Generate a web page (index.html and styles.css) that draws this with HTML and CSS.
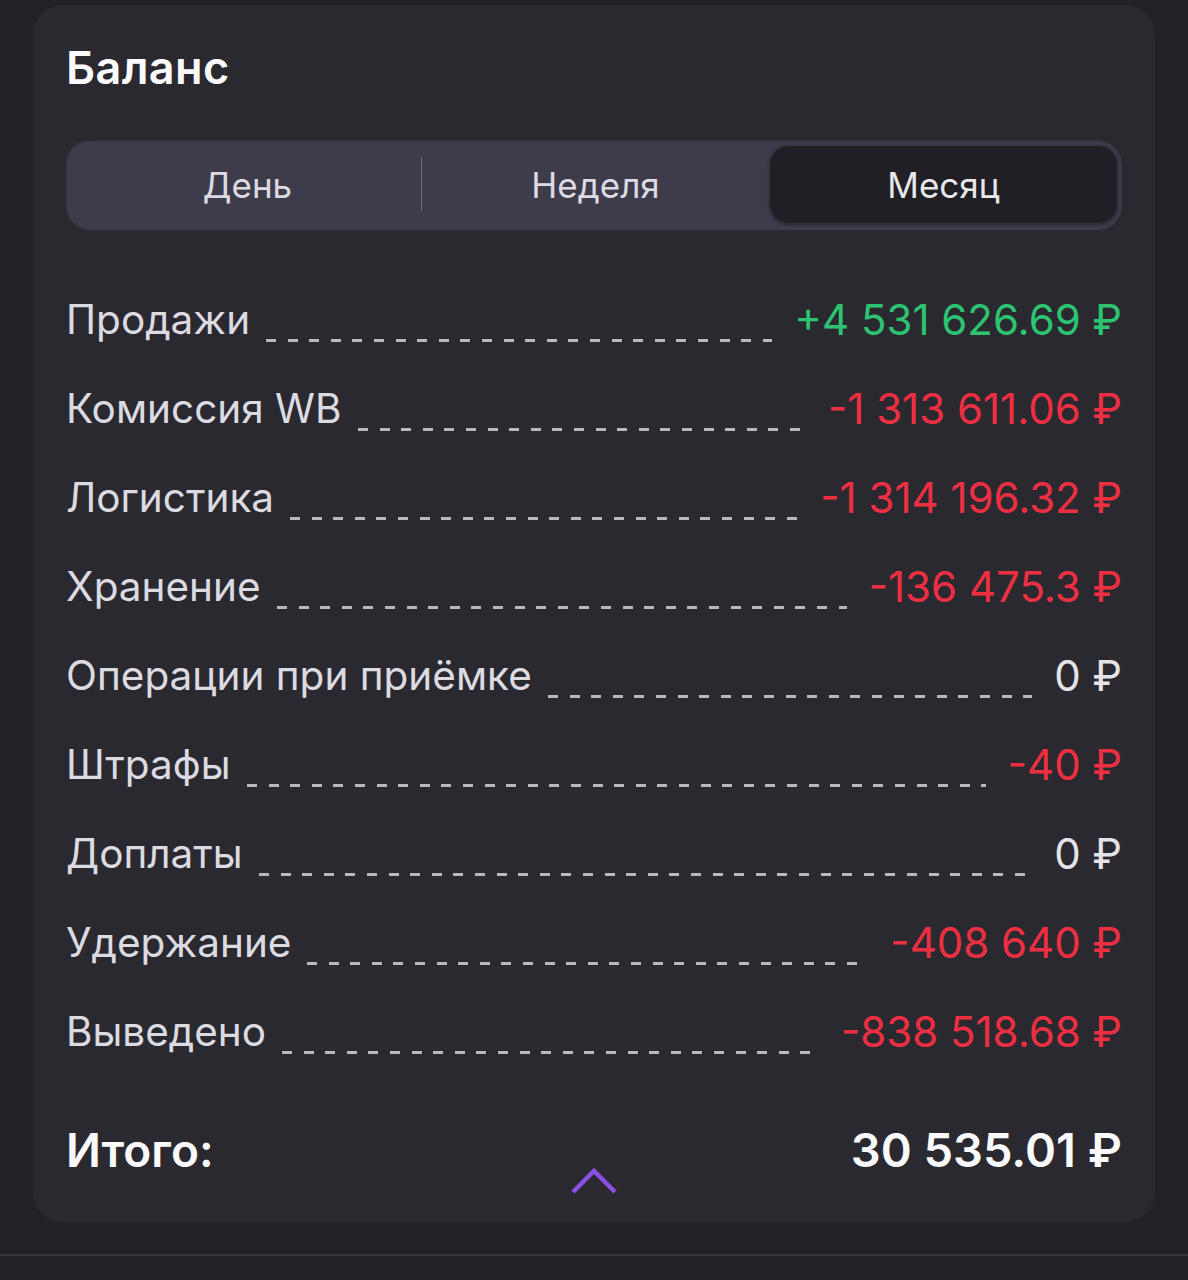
FILE: index.html
```html
<!DOCTYPE html>
<html lang="ru">

<head>
    <meta charset="UTF-8">
    <meta name="viewport" content="width=device-width, initial-scale=1.0">
    <title>Баланс</title>
    <link rel="stylesheet" href="styles.css">
</head>

<body>

    <div class="balance-card">
        <h1 class="card-title">Баланс</h1>

        <!-- period switch -->
        <div class="period-switch">
            <div class="period-item first">День</div>
            <div class="period-sep"></div>
            <div class="period-item">Неделя</div>
            <div class="period-item active">Месяц</div>
        </div>

        <div class="rows">
            <div class="row">
                <span class="row-label">Продажи</span>
                <span class="row-dots"></span>
                <span class="row-value plus">+4 531 626.69 ₽</span>
            </div>
            <div class="row">
                <span class="row-label">Комиссия WB</span>
                <span class="row-dots"></span>
                <span class="row-value minus">-1 313 611.06 ₽</span>
            </div>
            <div class="row">
                <span class="row-label">Логистика</span>
                <span class="row-dots"></span>
                <span class="row-value minus">-1 314 196.32 ₽</span>
            </div>
            <div class="row">
                <span class="row-label">Хранение</span>
                <span class="row-dots"></span>
                <span class="row-value minus">-136 475.3 ₽</span>
            </div>
            <div class="row">
                <span class="row-label">Операции при приёмке</span>
                <span class="row-dots"></span>
                <span class="row-value">0 ₽</span>
            </div>
            <div class="row">
                <span class="row-label">Штрафы</span>
                <span class="row-dots"></span>
                <span class="row-value minus">-40 ₽</span>
            </div>
            <div class="row">
                <span class="row-label">Доплаты</span>
                <span class="row-dots"></span>
                <span class="row-value">0 ₽</span>
            </div>
            <div class="row">
                <span class="row-label">Удержание</span>
                <span class="row-dots"></span>
                <span class="row-value minus">-408 640 ₽</span>
            </div>
            <div class="row">
                <span class="row-label">Выведено</span>
                <span class="row-dots"></span>
                <span class="row-value minus">-838 518.68 ₽</span>
            </div>
        </div>

        <div class="total">
            <span class="total-label">Итого:</span>
            <svg class="collapse-icon" width="48" height="30" viewBox="0 0 48 30">
                <polyline points="3,27 24,6 45,27" fill="none" stroke="#8b4fe3" stroke-width="4.5" />
            </svg>
            <span class="total-value">30 535.01 ₽</span>
        </div>
    </div>

    <div class="bottom-line"></div>

</body>

</html>
```

FILE: styles.css
```css
body {
    margin: 0;
    background-color: #222127;
    font-family: Inter, "Noto Sans", sans-serif;
    color: #dedde3;
    height: 1280px;
    overflow: hidden;
}

.balance-card {
    margin: 5px 33px 0 33px;
    padding: 0 33px 0 33px;
    height: 1217px;
    box-sizing: border-box;
    background-color: #2a2930;
    border-radius: 30px;
}

.card-title {
    margin: 0;
    padding-top: 34px;
    font-size: 45px;
    font-weight: 600;
    line-height: 58px;
    color: #fafafc;
    letter-spacing: 0.4px;
}

.period-switch {
    margin-top: 43px;
    height: 90px;
    box-sizing: border-box;
    padding: 5px 4px 6px 0;
    display: flex;
    align-items: stretch;
    background-color: #3e3c4b;
    border-radius: 24px;
    box-shadow: inset 0 1px 2px rgba(0, 0, 0, 0.25);
}

.period-item {
    flex: 1;
    display: flex;
    align-items: center;
    justify-content: center;
    font-size: 35px;
    color: #dcdbe3;
}

.period-item.first {
    padding-left: 8px;
}

.period-sep {
    width: 1px;
    margin: 12px 0 13px 0;
    background-color: #6e6c7c;
}

.period-item.active {
    background-color: #201f26;
    border-radius: 20px;
    border: 1px solid #34333d;
    box-shadow: 0 1px 3px rgba(0, 0, 0, 0.4);
    color: #e8e7ec;
}

.rows {
    margin-top: 45px;
}

.row {
    height: 89px;
    display: flex;
    align-items: center;
    font-size: 40.5px;
}

.row-label {
    white-space: nowrap;
    color: #dcdbe1;
}

.row-dots {
    flex: 1;
    height: 3px;
    margin: 42px 22px 0 16px;
    background-image: repeating-linear-gradient(to right, #b9b8c0 0, #b9b8c0 10px, transparent 10px, transparent 21.6px);
}

.row-value {
    white-space: nowrap;
    font-size: 42px;
    color: #e4e3e8;
}

.row-value.plus {
    color: #2cc471;
}

.row-value.minus {
    color: #ee2f42;
}

.total {
    margin-top: 44px;
    display: grid;
    grid-template-columns: 1fr auto 1fr;
    align-items: start;
}

.total-label {
    font-size: 46px;
    font-weight: 600;
    color: #fafafc;
    line-height: 60px;
}

.total-value {
    justify-self: end;
    font-size: 47px;
    font-weight: 600;
    color: #fafafc;
    line-height: 60px;
}

.collapse-icon {
    margin-top: 45px;
}

.bottom-line {
    margin-top: 32px;
    height: 2px;
    background-color: #38373e;
}
```
